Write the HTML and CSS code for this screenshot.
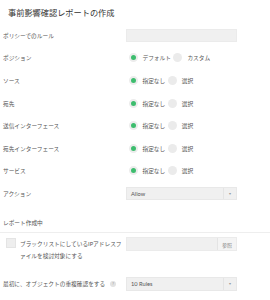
FILE: index.html
```html
<!DOCTYPE html>
<html lang="ja">
<head>
    <meta charset="UTF-8">
    <meta name="viewport" content="width=device-width, initial-scale=1.0">
    <title>事前影響確認レポートの作成</title>
    <link rel="stylesheet" href="styles.css">
</head>
<body>
    <h1 class="page-title">事前影響確認レポートの作成</h1>

    <div class="form-row">
        <div class="label">ポリシーでのルール</div>
        <div class="control"><div class="text-input short"></div></div>
    </div>
    <div class="form-row">
        <div class="label">ポジション</div>
        <div class="control radio-group">
            <span class="radio checked"></span><span class="option">デフォルト</span>
            <span class="radio"></span><span class="option">カスタム</span>
        </div>
    </div>
    <div class="form-row">
        <div class="label">ソース</div>
        <div class="control radio-group">
            <span class="radio checked"></span><span class="option">指定なし</span>
            <span class="radio"></span><span class="option">選択</span>
        </div>
    </div>
    <div class="form-row">
        <div class="label">宛先</div>
        <div class="control radio-group">
            <span class="radio checked"></span><span class="option">指定なし</span>
            <span class="radio"></span><span class="option">選択</span>
        </div>
    </div>
    <div class="form-row">
        <div class="label">送信インターフェース</div>
        <div class="control radio-group">
            <span class="radio checked"></span><span class="option">指定なし</span>
            <span class="radio"></span><span class="option">選択</span>
        </div>
    </div>
    <div class="form-row">
        <div class="label">宛先インターフェース</div>
        <div class="control radio-group">
            <span class="radio checked"></span><span class="option">指定なし</span>
            <span class="radio"></span><span class="option">選択</span>
        </div>
    </div>
    <div class="form-row">
        <div class="label">サービス</div>
        <div class="control radio-group">
            <span class="radio checked"></span><span class="option">指定なし</span>
            <span class="radio"></span><span class="option">選択</span>
        </div>
    </div>
    <div class="form-row">
        <div class="label">アクション</div>
        <div class="control">
            <div class="select short">
                <span class="select-value">Allow</span>
                <span class="select-arrow">▾</span>
            </div>
        </div>
    </div>

    <div class="section-title">レポート作成中</div>

    <div class="check-row">
        <div class="check-label">
            <span class="checkbox"></span>
            <span class="check-text">ブラックリストにしているIPアドレスファイルを検討対象にする</span>
        </div>
        <div class="control">
            <div class="file-input">
                <span class="file-field"></span>
                <span class="file-button">参照</span>
            </div>
        </div>
    </div>

    <div class="form-row">
        <div class="label">最初に、オブジェクトの重複確認をする<span class="help">?</span></div>
        <div class="control">
            <div class="select">
                <span class="select-value">10 Rules</span>
                <span class="select-arrow">▾</span>
            </div>
        </div>
    </div>
</body>
</html>
```

FILE: styles.css
```css
body {
    margin: 0;
    padding: 0;
    background-color: #fff;
    color: #555;
    font-family: Lato, "Noto Sans CJK JP", sans-serif;
    font-size: 5.7px;
}
.page-title {
    margin: 0;
    height: 24px;
    line-height: 26px;
    padding-left: 8px;
    font-size: 8.2px;
    font-weight: normal;
    color: #333;
}
.form-row {
    display: flex;
    align-items: center;
    height: 22.6px;
}
.label {
    flex: none;
    width: 123px;
    padding-left: 3px;
    display: flex;
    align-items: center;
}
.control {
    flex: none;
    width: 111px;
}
.text-input {
    height: 13px;
    background-color: #f0f0f0;
    border: 1px solid #ebebeb;
    box-sizing: border-box;
}

/* ラジオボタン */
.radio-group {
    display: flex;
    align-items: center;
    width: auto;
}
.radio {
    flex: none;
    width: 9px;
    height: 9px;
    border-radius: 50%;
    background-color: #ebebeb;
    box-sizing: border-box;
}
.radio:first-child {
    margin-left: 2.5px;
}
.radio.checked {
    background-color: #3dbd6e;
    border: 2px solid #ececec;
}
.option {
    margin-left: 5px;
    margin-right: 2.5px;
}

/* セレクト */
.select {
    display: flex;
    height: 14.5px;
    background-color: #f0f0f0;
    border: 1px solid #e8e8e8;
    box-sizing: border-box;
}
.select.short {
    height: 13px;
}
.select-value {
    flex: 1;
    display: flex;
    align-items: center;
    padding-left: 4px;
}
.select-arrow {
    width: 12px;
    display: flex;
    align-items: center;
    justify-content: center;
    border-left: 1px solid #e4e4e4;
    color: #999;
    font-size: 4px;
}

.section-title {
    padding: 12px 0 3px 3px;
    line-height: 12px;
    border-bottom: 1px solid #eeeeee;
}

/* チェックボックスの行 */
.check-row {
    display: flex;
    padding: 4.2px 0 10.7px;
}
.check-label {
    flex: none;
    width: 120px;
    padding-left: 6px;
    display: flex;
    align-items: flex-start;
}
.checkbox {
    flex: none;
    width: 9.5px;
    height: 10px;
    margin-top: 1px;
    background-color: #eeeeee;
    border: 1px solid #e4e4e4;
    box-sizing: border-box;
}
.check-text {
    margin-top: 1px;
    margin-left: 4.5px;
    line-height: 12px;
    line-break: loose;
}
.file-input {
    display: flex;
    height: 14.5px;
    background-color: #f0f0f0;
    border: 1px solid #ebebeb;
    box-sizing: border-box;
}
.file-field {
    flex: 1;
}
.file-button {
    width: 18px;
    display: flex;
    align-items: center;
    justify-content: center;
    background-color: #f4f4f4;
    border-left: 1px solid #e4e4e4;
    color: #888;
    font-size: 5px;
}
.help {
    width: 6px;
    height: 6px;
    margin-left: 5px;
    border-radius: 50%;
    background-color: #e2e2e2;
    color: #999;
    font-size: 4px;
    line-height: 6px;
    text-align: center;
}
```
